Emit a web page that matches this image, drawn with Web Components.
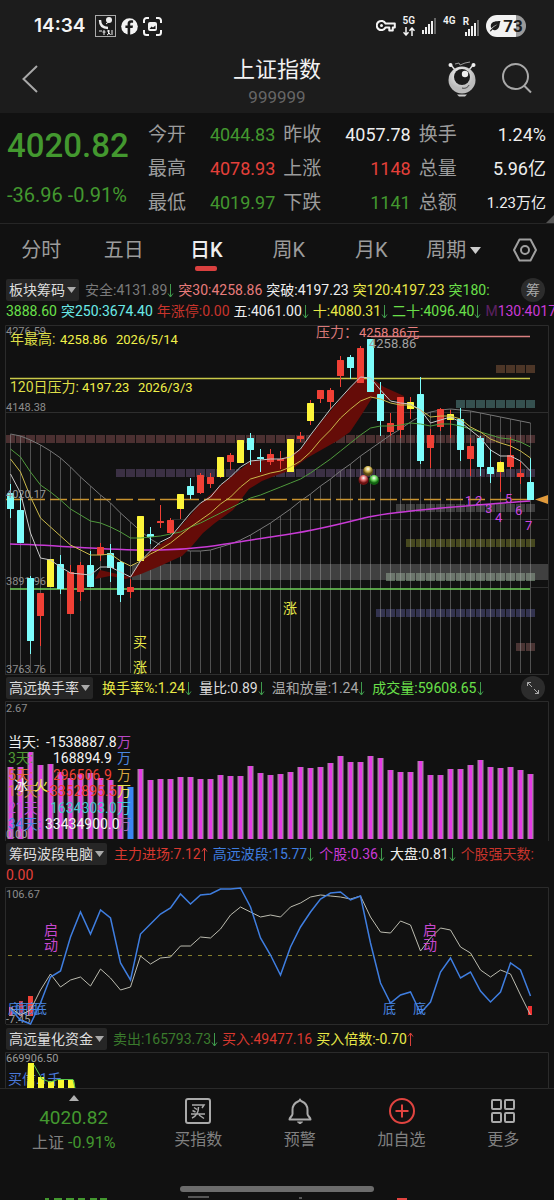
<!DOCTYPE html>
<html lang="zh-CN">
<head>
<meta charset="utf-8">
<meta name="viewport" content="width=device-width, initial-scale=1">
<title>上证指数 999999</title>
<style>
  html { background: #111; }
  body { margin: 0; background: #111; color: #ddd; font: 14px/20px Roboto, "Noto Sans CJK SC", sans-serif; overflow-x: hidden; }
</style>
</head>
<body>
<stock-page></stock-page>

<script>
const BASE = `<style>
  *, *::before, *::after { box-sizing: border-box; }
  :host { display: block; }
  button, select, a { font: inherit; color: inherit; background: none; border: 0; padding: 0; margin: 0; text-decoration: none; }
  svg { display: block; flex: none; }
</style>`;

function component(name, markup) {
  customElements.define(name, class extends HTMLElement {
    constructor() {
      super();
      const html = typeof markup === 'function' ? markup(this) : markup;
      const template = document.createElement('template');
      template.innerHTML = BASE + html;
      this.attachShadow({ mode: 'open' }).append(template.content.cloneNode(true));
    }
  });
}

/* ---------- status bar ---------- */
const signalBars = `<svg width="14" height="16" viewBox="0 0 14 16" fill="#eee"><rect y="12" width="2" height="4"/><rect x="3" y="9" width="2" height="7"/><rect x="6" y="6" width="2" height="10"/><rect x="9" y="3" width="2" height="13"/><rect x="12" y="0" width="2" height="16" fill="#666"/></svg>`;

component('status-bar', `
<style>
  :host { display: flex; align-items: center; justify-content: space-between; padding: 14px 28px 14px 34px; color: #f4f4f4; }
  .side { display: flex; align-items: center; height: 24px; }
  time { font: 600 19px/24px Inter, sans-serif; margin-right: 4px; }
  .left { gap: 5px; }
  .right { gap: 7px; }
  .net { display: grid; justify-items: center; font: 600 10px/11px Roboto, sans-serif; height: 22px; }
  .roam { display: flex; align-items: flex-end; }
  .roam b { font: 600 10px/11px Roboto, sans-serif; align-self: flex-start; margin-right: -4px; }
  .roam svg { margin-top: 4px; }
  .battery { display: flex; align-items: center; justify-content: center; gap: 2px; width: 40px; height: 22px; border-radius: 11px; background: linear-gradient(90deg, #f2f2f2 74%, #9a9a9a 74%); color: #1c1c1c; font: 700 17px/22px Roboto, sans-serif; }
</style>
<div class="side left">
  <time>14:34</time>
  <svg width="21" height="22" viewBox="0 0 21 22" fill="none" stroke="#eee"><rect x=".5" y=".5" width="20" height="21" stroke="#aaa"/><path d="M5 5c0 5 3 8 8 8" stroke-width="2.4"/><circle cx="14" cy="5" r="3" fill="#eee" stroke="none"/><path d="M11 9l5-4M4 16h3m2-1v5m-1.500-3h3M12 16h3m-1.500-1v4l-1.500 1m1.500-3l2 3M17 15v5" stroke-width="1"/></svg>
  <svg width="17" height="17" viewBox="0 0 17 17"><circle cx="8.500" cy="8.500" r="8.300" fill="#f4f4f4"/><path d="M9.200 17v-7h2.400l.4-2.600H9.200V6.200c0-.9.400-1.400 1.500-1.400h1.400V2.500c-3.600-.8-5.500.5-5.500 3.300v1.600H4.400V10h2.200v7z" fill="#1c1c1c"/></svg>
  <svg width="19" height="19" viewBox="0 0 19 19" fill="none" stroke="#f4f4f4" stroke-width="2"><path d="M1 6V3.500A2.500 2.500 0 0 1 3.500 1H6M13 1h2.500A2.500 2.500 0 0 1 18 3.500V6M18 13v2.500a2.500 2.500 0 0 1-2.500 2.500H13M6 18H3.500A2.500 2.500 0 0 1 1 15.500V13"/><rect x="5" y="5" width="9" height="9" rx="2" fill="#f4f4f4" stroke="none"/><path d="M6.500 12l2-2.500 1.500 1 2.500-2v3.500z" fill="#1c1c1c" stroke="none"/></svg>
</div>
<div class="side right">
  <svg width="20" height="14" viewBox="0 0 20 14" fill="none" stroke="#f4f4f4" stroke-width="2"><path d="M9.500 4.500h9.300v4h-2v3h-3.500v-3H9.500A4.600 4.600 0 1 1 9.500 4.500z" stroke-linejoin="round"/><circle cx="5.500" cy="6.500" r="1.500" fill="#f4f4f4" stroke="none"/></svg>
  <div class="net"><span>5G</span><svg width="12" height="9" viewBox="0 0 12 9" fill="none" stroke="#f4f4f4" stroke-width="1.500"><path d="M3 0v8M.5 5.300L3 8l2.500-2.700M9 9V1M6.500 3.700L9 1l2.500 2.700"/></svg></div>
  ${signalBars}
  <div class="net"><span>4G</span></div>
  <div class="roam"><b>R</b>${signalBars}</div>
  <div class="battery"><svg width="12" height="12" viewBox="0 0 12 12"><path d="M11.500 1C7 1 3 1.500 2 4.500c-.6 1.800 0 3 .5 3.800C4 6.500 6 5 8.500 4.500 5.500 6 3 8 .8 11l1 .6 1.700-2C6 11 9 9.800 10 7c.7-2 .5-4 1.500-6z" fill="#1c1c1c"/></svg><span>73</span></div>
</div>`);

/* ---------- title bar ---------- */
component('title-bar', `
<style>
  :host { display: grid; grid-template-columns: 1fr auto 1fr; align-items: center; height: 61px; padding: 0 22px 2px; }
  h1 { margin: 0; font: 400 22px/30px Roboto, "Noto Sans CJK SC", sans-serif; color: #f2f2f2; }
  .name { text-align: center; }
  p { margin: 0; font-size: 17px; line-height: 24px; color: #666; }
  button { padding-bottom: 6px; justify-self: start; }
  .tools { display: flex; justify-content: flex-end; align-items: center; gap: 26px; }
</style>
<button aria-label="返回"><svg width="16" height="28" viewBox="0 0 16 28" fill="none" stroke="#a8a8a8" stroke-width="2"><path d="M15 1L1.500 14 15 27"/></svg></button>
<div class="name"><h1>上证指数</h1><p>999999</p></div>
<div class="tools">
  <button aria-label="助手"><svg width="28" height="36" viewBox="0 0 28 36">
    <defs><radialGradient id="eye" cx=".45" cy=".3"><stop offset="0" stop-color="#fff"/><stop offset="1" stop-color="#bbb"/></radialGradient></defs>
    <path d="M3 4l4 5M25 4l-4 5" stroke="#ddd" stroke-width="1.500"/><path d="M7 3l4-1 1 2 5-2 5-1" stroke="#999" fill="none"/>
    <circle cx="2.500" cy="4" r="2" fill="#eee"/><circle cx="25.500" cy="4" r="2" fill="#eee"/>
    <circle cx="14" cy="19" r="13.500" fill="url(#eye)"/><circle cx="14" cy="16" r="8" fill="#1c1c1c"/><circle cx="17" cy="13" r="3.200" fill="#eee"/>
    <path d="M14 27c3 1 6-.5 7-3" stroke="#444" fill="none"/><path d="M9 33.500h10l-2 2h-6z" fill="#ccc"/></svg></button>
  <button aria-label="搜索"><svg width="30" height="31" viewBox="0 0 30 31" fill="none" stroke="#a8a8a8" stroke-width="2"><circle cx="13.500" cy="13.500" r="12.500"/><path d="M22 22.500l7 7"/></svg></button>
</div>`);

/* ---------- quote panel ---------- */
component('quote-stat', `
<style>
  :host { display: flex; align-items: center; justify-content: space-between; height: 34px; white-space: nowrap; }
  .label { font-size: 19px; color: #9c9c9c; }
  .value { font-size: 18px; color: #eee; }
  :host([tone=up]) .value { color: #e5403a; }
  :host([tone=down]) .value { color: #43982f; }
  :host([small]) .value { font-size: 15px; }
</style>
<span class="label"><slot name="label"></slot></span><span class="value"><slot></slot></span>`);

const stat = (label, value, tone = '', extra = '') => `<quote-stat tone="${tone}" ${extra}><span slot="label">${label}</span>${value}</quote-stat>`;

component('quote-panel', `
<style>
  :host { display: flex; gap: 8px; padding: 5px 8px 3px 7px; border-bottom: 1px solid #262626; position: relative; }
  .last { width: 133px; flex: none; color: #43982f; }
  .price { font-size: 33px; line-height: 56px; font-weight: 500; }
  .change { font-size: 20px; line-height: 42px; white-space: nowrap; }
  .stats { flex: 1; display: grid; grid-template-columns: repeat(3, 1fr); column-gap: 8px; }
  .corner { position: absolute; right: 0; bottom: 0; }
</style>
<div class="last"><div class="price">4020.82</div><div class="change">-36.96 -0.91%</div></div>
<div class="stats">
  ${stat('今开', '4044.83', 'down')}${stat('昨收', '4057.78')}${stat('换手', '1.24%')}
  ${stat('最高', '4078.93', 'up')}${stat('上涨', '1148', 'up')}${stat('总量', '5.96亿')}
  ${stat('最低', '4019.97', 'down')}${stat('下跌', '1141', 'down')}${stat('总额', '1.23万亿', '', 'small')}
</div>
<svg class="corner" width="8" height="8"><path d="M8 0v8H0z" fill="#555"/></svg>`);

/* ---------- period tabs ---------- */
component('period-tabs', `
<style>
  :host { display: grid; grid-template-columns: repeat(6, 7fr) 5fr; height: 52px; color: #9c9c9c; font-size: 20px; }
  button { display: flex; align-items: center; justify-content: center; gap: 4px; position: relative; white-space: nowrap; }
  button[aria-selected=true] { color: #eee; font-weight: 500; }
  button[aria-selected=true]::after { content: ""; position: absolute; bottom: 5px; width: 22px; height: 5px; border-radius: 2px; background: #d9403f; }
</style>
<button>分时</button><button>五日</button><button aria-selected="true">日K</button><button>周K</button><button>月K</button>
<button>周期<svg width="11" height="7"><path d="M0 0h11L5.500 7z" fill="#ccc"/></svg></button>
<button aria-label="设置"><svg width="24" height="24" viewBox="0 0 24 24" fill="none" stroke="#a0a0a0" stroke-width="2"><path d="M6.500 1.500h11L23 12l-5.500 10.500h-11L1 12z" stroke-linejoin="round"/><circle cx="12" cy="12" r="4"/></svg></button>`);

/* ---------- indicator rows ---------- */
component('indicator-select', (el) => `
<style>
  :host { display: inline-flex; flex: none; margin-right: 2px; }
  label { display: flex; align-items: center; gap: 2px; height: 22px; padding: 0 3px; background: #262626; border-radius: 2px; color: #ddd; }
  select { appearance: none; line-height: 20px; outline: 0; }
</style>
<label><select aria-label="指标"><option>${el.getAttribute('name')}</option></select><svg width="9" height="6"><path d="M0 0h9L4.500 6z" fill="#aaa"/></svg></label>`);

component('indicator-value', (el) => {
  const dir = el.getAttribute('dir-to');
  const arrow = dir === 'down'
    ? '<svg width="7" height="15" viewBox="0 0 7 15" fill="none" stroke="#3f9a4c"><path d="M3.500 1v13M1 10.500L3.500 14 6 10.500"/></svg>'
    : dir === 'up' ? '<svg width="7" height="15" viewBox="0 0 7 15" fill="none" stroke="#d8403a"><path d="M3.500 14V1M1 4.500L3.500 1 6 4.500"/></svg>' : '';
  return `<style>:host { display: inline-flex; align-items: center; flex: none; white-space: nowrap; color: ${el.getAttribute('color')}; }</style><span><slot></slot></span>${arrow}`;
});

component('indicator-bar', `
<style>
  :host { padding: 2px 0 2px 6px; overflow: hidden; }
  .row { display: flex; align-items: center; gap: var(--gap, 5px); height: 22px; }
  .end { margin-left: auto; padding-right: 9px; }
</style>
<div class="row"><slot></slot><div class="end"><slot name="end"></slot></div></div>
<slot name="more"></slot>`);

const value = (text, color, dir = '') => `<indicator-value color="${color}" dir-to="${dir}">${text}</indicator-value>`;

/* ---------- chart helpers ---------- */
const X = (i) => 10.5 + i * 10;
const line = (ys, color, width = 1) => `<polyline points="${ys.map((y, i) => X(i) + ',' + y).join(' ')}" fill="none" stroke="${color}" stroke-width="${width}"/>`;
const text = (x, cy, str, color, size = 14, extra = '') => `<text x="${x}" y="${cy + Math.round(size * 0.36)}" fill="${color}" font-size="${size}" xml:space="preserve" ${extra}>${str}</text>`;
const frame = (top, bottom) => `<path d="M5.500 ${bottom}V${top}.5H548.500V${bottom}" fill="none" stroke="#2b2b2b"/>`;
const chart = (top, height, body) => `<style>svg { width: 100%; height: auto; }</style><svg viewBox="0 ${top} 554 ${height}" role="img">${body}</svg>`;

const RED = '#f04035', CYAN = '#7dfdfb', YELLOW = '#fdf53a';

/* colour, body top, body bottom, wick top, wick bottom */
const candles = [
  ['c',493,509,484,518],['c',510,543,493,543],['c',578,641,576,654],['r',593,616,593,646],['y',559,587,559,587],
  ['c',564,589,555,594],['r',572,614,565,614],['r',565,592,562,601],['c',565,587,551,587],['r',547,555,543,561],
  ['c',553,568,544,582],['c',562,595,561,602],['r',587,592,579,598],['y',516,561,516,561],['c',534,537,527,544],
  ['r',521,523,505,528],['r',520,533,518,534],['y',494,509,494,519],['c',486,495,478,499],['r',475,493,473,494],
  ['r',477,484,473,488],['y',457,477,457,478],['r',455,462,453,470],['y',440,463,440,463],['c',438,450,433,465],
  ['c',457,459,449,472],['r',454,462,449,465],['r',459,461,451,469],['y',439,472,439,472],['r',436,439,432,442],
  ['y',403,421,400,425],['r',390,399,390,403],['r',390,402,388,409],['r',360,376,356,387],['c',357,368,355,379],
  ['r',348,383,346,383],['c',339,392,339,392],['c',394,421,382,436],['r',423,432,413,436],['r',397,430,397,438],
  ['y',402,409,397,419],['c',394,461,377,464],['r',435,448,429,468],['r',409,427,408,431],['y',414,420,410,438],
  ['c',419,450,408,461],['r',446,459,438,476],['c',438,467,436,476],['c',467,474,449,483],['y',462,472,461,492],
  ['r',455,467,437,469],['r',473,477,462,484],['c',482,500,458,500],
];
const ma5 = [474,493,533,558,560,567,573,574,575,567,567,572,577,561,551,542,537,525,513,503,497,485,477,467,461,460,459,459,457,449,435,422,409,398,387,377,378,390,401,403,404,410,423,420,417,422,430,438,450,456,456,461,471];
const ma10 = [459,472,497,518,527,536,545,550,555,555,554,561,566,561,554,549,543,535,527,520,513,504,497,487,479,476,473,471,467,461,452,440,430,418,409,401,397,399,403,405,405,410,417,416,416,419,427,432,439,443,446,451,458];
const ma20 = [449,457,472,485,492,500,509,515,521,523,527,532,538,538,537,536,534,532,527,523,518,513,508,503,498,495,491,487,483,479,473,466,459,451,443,435,428,426,426,425,423,424,426,424,424,426,429,432,435,438,439,442,447];
const longCurve = [434,436,440,445,451,458,467,477,486,495,503,513,522,531,539,545,548,550,551,551,550,547,544,540,535,529,523,516,509,501,494,486,479,471,464,456,449,442,435,429,422,416,412,410,409,410,411,413,415,417,419,421,423];
const chipRows = [[496,365,4,'#4d3627'],[456,400,8,'#35504f'],[6,435,53,'#4b3031'],[116,469,42,'#3b3044'],[396,504,14,'#3c3c3c'],[406,539,13,'#46481f'],[386,573,15,'#5a6b5a'],[376,609,16,'#33334f'],[516,643,2,'#4a3534']];

component('kline-chart', () => chart(325, 350, `
  ${frame(325, 675)}
  <path d="M6 412.500H548M172 519.500H548M531 587.500H548M6 674.500H548" stroke="#2e2e2e"/>
  ${chipRows.map(([x, y, n, c]) => Array.from({ length: n }, (_, k) => `<rect x="${x + k * 10}" y="${y}" width="9" height="8" fill="${c}"/>`).join('')).join('')}
  <rect x="132" y="564" width="416" height="16" fill="#888" opacity=".4"/>
  ${longCurve.map((y, i) => `<path d="M${X(i)} ${y}V673" stroke="#aaa" stroke-opacity=".42"/>`).join('')}
  ${line(longCurve, '#777')}
  <path d="M95 579L100 570 130 577 141 561 152 550 171 537 201 503 221 485 251 461 281 459 301 449 321 422 350 388 360 377 371 378 384 387 404 396 404 400 390 400 372 398 362 414 350 432 337 441 307 458 291 470 277 475 262 481 249 489 233 510 215 523 203 533 192 546 182 556 160 566 141 574 126 579 110 576z" fill="#650c08"/>
  <path d="M371 336.500H530" stroke="#d98080" stroke-width="1.500"/>
  <path d="M10 378.500H530" stroke="#c9c94a" stroke-width="1.500"/>
  <path d="M10 589H530" stroke="#6fd058" stroke-width="1.500"/>
  <path d="M6 499.500H534" stroke="#c9932f" stroke-width="1.500" stroke-dasharray="17 5"/>
  ${text(6, 331, '4276.59', '#8c8c8c', 11)}${text(6, 407, '4148.38', '#8c8c8c', 11)}${text(6, 581, '3891.96', '#8c8c8c', 11)}${text(6, 669, '3763.76', '#8c8c8c', 11)}
  <path d="M10 544C60 545 110 551 160 550S240 541 277 536 340 524 364 518 450 507 530 501" fill="none" stroke="#c93ad6" stroke-width="1.500"/>
  ${candles.map(([c, t, b, h, l], i) => {
    const col = c === 'r' ? RED : c === 'c' ? CYAN : YELLOW;
    const wick = c === 'c' ? CYAN : RED;
    return (h < t || l > b ? `<path d="M${X(i)} ${h}V${l}" stroke="${wick}"/>` : '') + `<rect x="${X(i) - 3.5}" y="${t}" width="7" height="${b - t}" rx=".5" fill="${col}"/>`;
  }).join('')}
  ${line(ma20, '#4f9a3c')}${line(ma10, '#c9b84a')}${line(ma5, '#c8c8c8')}
  ${text(6, 494, '4020.17', '#9a9a9a', 11)}
  ${text(10, 339, '年最高:', '#dede48')}${text(60, 339, '4258.86', '#f0f04a', 13)}${text(116, 339, '2026/5/14', '#f0f04a', 13)}
  ${text(10, 387, '120日压力:', '#dede48')}${text(82, 387, '4197.23', '#f0f04a', 13)}${text(138, 387, '2026/3/3', '#f0f04a', 13)}
  ${text(316, 332, '压力：', '#d87878')}${text(359, 332, '4258.86元', '#e88080', 13)}
  ${text(369, 343, '4258.86', '#a0a0a0', 13)}
  ${text(133, 642, '买', '#e8e848')}${text(133, 667, '涨', '#e8e848')}${text(283, 608, '涨', '#e8e848')}
  ${[[465,500],[475,500],[485,508],[495,517],[505,498],[515,510],[525,525]].map(([x, y], i) => text(x, y, i + 1, '#d046e0', 13)).join('')}
  <path d="M535 499.500L548 495V504z" fill="#e09a3c"/>
  <defs>
    <radialGradient id="gold" cy=".3"><stop offset="0" stop-color="#fff"/><stop offset=".5" stop-color="#d8c060"/><stop offset="1" stop-color="#5c4a10"/></radialGradient>
    <radialGradient id="ruby" cy=".3"><stop offset="0" stop-color="#fff"/><stop offset=".5" stop-color="#e07070"/><stop offset="1" stop-color="#6c1010"/></radialGradient>
    <radialGradient id="jade" cy=".3"><stop offset="0" stop-color="#fff"/><stop offset=".5" stop-color="#70d860"/><stop offset="1" stop-color="#106010"/></radialGradient>
  </defs>
  <circle cx="368" cy="471" r="5" fill="url(#gold)"/><circle cx="363.500" cy="480" r="5" fill="url(#ruby)"/><circle cx="374" cy="480" r="5" fill="url(#jade)"/>
`));

const volumes = [767,767,752,765,764,772,778,774,773,778,780,785,787,769,780,779,779,777,777,779,779,775,776,776,766,773,775,774,772,767,768,767,763,756,762,762,756,758,770,772,772,761,775,775,769,769,765,760,767,768,767,770,774];
const flows = [
  ['当天:','#eee',46,'-1538887.8','#f4f4f4','#b848c4'],
  ['3天:','#4f9a34',53,'168894.9','#f4f4f4','#4a86e0'],
  ['5天:','#e0683a',53,'296506.9','#f04035','#d8a840'],
  ['13天:','#d08a50',46,'-3352895.5','#f04035','#e8e048'],
  ['21天:','#c050e0',50,'1634303.0','#48c8d0','#48c8d8'],
  ['34天:','#4a86e0',45,'33434900.0','#f4f4f4','#9a6aa8'],
];
component('volume-chart', () => chart(701, 140, `
  ${frame(701, 841)}
  ${text(6, 708, '2.67', '#8c8c8c', 11)}
  ${volumes.map((y, i) => i === 12
    ? `<rect x="${X(i) - 3}" y="${y}" width="6" height="${839 - y}" fill="#3a86f0"/>`
    : `<rect x="${X(i) - 3}" y="${y}" width="6" height="${839 - y}" fill="#b07aac"/><rect x="${X(i) - 1.5}" y="${y}" width="3" height="${839 - y}" fill="#e63ae6"/>`).join('')}
  ${text(6, 834, '0.00', '#a8a0a8', 11)}
  ${flows.map(([l, lc, x, n, nc, uc], i) => text(8, 742 + Math.round(i * 16.4), l, lc) + text(x, 742 + Math.round(i * 16.4), n, nc) + text(117, 742 + Math.round(i * 16.4), '万', uc)).join('')}
  ${text(14, 785, '冰', '#f4f4f4')}${text(34, 785, '火', '#f0f04a')}
`));

const waveBlue = [1009,1020,1024,1003,977,971,937,912,934,910,918,963,980,934,924,914,908,894,904,895,894,889,889,888,907,938,955,975,947,927,912,899,893,892,900,896,943,983,1003,995,992,1013,1002,972,958,978,972,991,1002,992,963,970,996];
const waveWhite = [1008,1015,1010,990,974,987,980,977,986,969,978,990,987,956,964,958,957,946,946,937,938,929,915,907,912,917,915,917,907,903,897,895,896,897,899,896,917,932,933,921,925,951,938,928,930,947,953,970,977,970,974,995,1015];
component('wave-chart', () => chart(887, 138, `
  ${frame(887, 1024)}<path d="M6 1024.500H548" stroke="#2b2b2b"/>
  ${text(6, 894, '106.67', '#8c8c8c', 11)}
  <path d="M8 955.500H534" stroke="#86802c" stroke-dasharray="4 6"/>
  <rect x="9" y="1007" width="4" height="9" fill="#d84858"/><rect x="19" y="1001" width="4" height="15" fill="#c04050"/><rect x="28" y="996" width="5" height="20" fill="#f04035"/><rect x="528" y="1006" width="4" height="9" fill="#f03030"/>
  ${[8, 15, 25, 34, 383, 413].map((x) => text(x, 1008, '底', '#4a86e0', 13)).join('')}
  ${text(6, 1019, '-7.45', '#a0a0a0', 11)}
  ${line(waveWhite, '#bcbcb0')}${line(waveBlue, '#3f7ee0', 1.5)}
  ${[44, 423].map((x) => text(x, 930, '启', '#c848d0') + text(x, 945, '动', '#c848d0')).join('')}
`));

component('fund-chart', () => chart(1052, 36, `
  ${frame(1052, 1088)}
  ${text(6, 1058, '669906.50', '#9a9a9a', 11)}
  ${text(8, 1079, '买信.1千', '#4a78d8')}
  <path d="M28 1063h6v25h-7zM38 1077h6v11h-6zM48 1081h6v7h-6zM58 1080h6v8h-6zM68 1080h6l1 8h-7z" fill="#f8f830"/>
  <path d="M34 1065L42 1079 50 1082 58 1079.500H73L75 1088" fill="none" stroke="#58c848"/>
`));

/* ---------- bottom navigation ---------- */
component('nav-item', `
<style>
  a { display: grid; justify-items: center; align-content: start; gap: 4px; padding-top: 9px; color: #808080; font-size: 16px; line-height: 24px; }
  ::slotted(svg) { display: block; }
</style>
<a href="#"><slot name="icon"></slot><span><slot></slot></span></a>`);

component('bottom-nav', `
<style>
  :host { display: grid; grid-template-columns: 29fr repeat(4, 20fr); height: 96px; border-top: 1px solid #2a2a2a; }
  .index { display: grid; justify-items: center; align-content: start; padding-top: 6px; color: #43982f; }
  .index b { font-weight: 400; font-size: 19px; line-height: 26px; margin-top: 4px; }
  .index span { font-size: 16px; line-height: 24px; }
  i { font-style: normal; color: #808080; }
</style>
<a class="index" href="#"><svg width="10" height="6"><path d="M5 0l5 6H0z" fill="#b0b0b0"/></svg><b>4020.82</b><span><i>上证</i> -0.91%</span></a>
<nav-item><svg slot="icon" width="26" height="26" viewBox="0 0 26 26" fill="none" stroke="#aaa" stroke-width="2"><rect x="1" y="1" width="24" height="24" rx="2"/><path d="M7 7h12l-2 3M9 9.500l3 2M7.500 12.500l3 1.500M6 16h14M13.500 9c0 6-2 9-6.500 11M14 17l5 3.500" stroke-width="1.500"/></svg>买指数</nav-item>
<nav-item><svg slot="icon" width="26" height="26" viewBox="0 0 26 26" fill="none" stroke="#aaa" stroke-width="2"><path d="M13 1.500c0 1-.3 1.300-2 2C7.500 5 5.500 8 5.500 12v4c0 2-3 3.500-3 5.500h21c0-2-3-3.500-3-5.500v-4c0-4-2-7-5.500-8.500-1.700-.7-2-1-2-2z" stroke-linejoin="round"/><path d="M10.500 24h5L13 26z" fill="#aaa" stroke-width="1"/></svg>预警</nav-item>
<nav-item><svg slot="icon" width="26" height="26" viewBox="0 0 26 26" fill="none" stroke="#e04440" stroke-width="2"><circle cx="13" cy="13" r="12"/><path d="M13 6.500v13M6.500 13h13"/></svg>加自选</nav-item>
<nav-item><svg slot="icon" width="26" height="26" viewBox="0 0 26 26" fill="none" stroke="#aaa" stroke-width="2"><rect x="2" y="2" width="9" height="9" rx="1"/><rect x="15" y="2" width="9" height="9" rx="1"/><rect x="2" y="15" width="9" height="9" rx="1"/><rect x="15" y="15" width="9" height="9" rx="1"/></svg>更多</nav-item>`);

component('home-indicator', `
<style>
  :host { display: grid; justify-items: center; padding: 2px 0 4px; }
  div { width: 35%; height: 6px; border-radius: 3px; background: #6c6c6c; }
</style><div></div>`);

/* top edge of the next sheet, peeking above the screen's end */
component('sheet-peek', `
<style>
  :host { height: 4px; overflow: hidden; }
  svg { width: 100%; height: 4px; }
</style>
<svg viewBox="0 0 554 4" preserveAspectRatio="none"><path d="M45 3h4M54 3h8M66 3h8M78 3h7M90 3h7M100 3h7" stroke="#43982f" stroke-width="2"/><path d="M188 1h21M299 2h3" stroke="#555" stroke-width="2"/><path d="M397 3h10" stroke="#e04440" stroke-width="2"/></svg>`);

/* ---------- page ---------- */
component('stock-page', `
<style>
  header { background: #1c1c1c; }
  .line { display: flex; align-items: center; gap: 4px; height: 20px; }
  .first { --gap: 4px; padding: 3px 0 4px 6px; }
  .turnover { --gap: 7px; }
  .funds { --gap: 4px; padding: 3px 0 2px 6px; }
  .round { display: grid; place-items: center; width: 24px; height: 24px; border-radius: 50%; background: #2c2c2c; color: #aaa; }
</style>
<header><status-bar></status-bar><title-bar></title-bar></header>
<main>
  <quote-panel></quote-panel>
  <period-tabs></period-tabs>
  <indicator-bar class="first">
    <indicator-select name="板块筹码"></indicator-select>
    ${value('安全:4131.89', '#7a7a7a', 'down')}${value('突30:4258.86', '#e87c7c')}${value('突破:4197.23', '#eee')}${value('突120:4197.23', '#e8e848')}${value('突180:', '#6ae04a')}
    <button class="round" slot="end">筹</button>
    <div class="line" slot="more">${value('3888.60', '#6ae04a')}${value('突250:3674.40', '#6aeae8')}${value('年涨停:0.00', '#c8342c')}${value('五:4061.00', '#eee', 'down')}${value('十:4080.31', '#e8e848', 'down')}${value('二十:4096.40', '#6ae04a', 'down')}${value('<span style="opacity:.4">M</span>130:4017', '#c93ad6')}</div>
  </indicator-bar>
  <kline-chart></kline-chart>
  <indicator-bar class="turnover">
    <indicator-select name="高远换手率"></indicator-select>
    ${value('换手率%:1.24', '#e8e848', 'down')}${value('量比:0.89', '#ddd', 'down')}${value('温和放量:1.24', '#a8a8a8', 'down')}${value('成交量:59608.65', '#6ae04a', 'down')}
    <button class="round" slot="end" aria-label="全屏"><svg width="12" height="12" viewBox="0 0 12 12" fill="none" stroke="#aaa"><path d="M.5 4V.5H4M.5.500L5 5M11.500 8v3.500H8M11.500 11.500L7 7"/></svg></button>
  </indicator-bar>
  <volume-chart></volume-chart>
  <indicator-bar>
    <indicator-select name="筹码波段电脑"></indicator-select>
    ${value('主力进场:7.12', '#d8382f', 'up')}${value('高远波段:15.77', '#3f7ee0', 'down')}${value('个股:0.36', '#c93ad6', 'down')}${value('大盘:0.81', '#eee', 'down')}${value('个股强天数:', '#c8342c')}
    <div class="line" slot="more">${value('0.00', '#e5403a')}</div>
  </indicator-bar>
  <wave-chart></wave-chart>
  <indicator-bar class="funds">
    <indicator-select name="高远量化资金"></indicator-select>
    ${value('卖出:165793.73', '#3a7a2c', 'down')}${value('买入:49477.16', '#d8382f')}${value('买入倍数:-0.70', '#e8e848', 'up')}
  </indicator-bar>
  <fund-chart></fund-chart>
</main>
<bottom-nav></bottom-nav>
<home-indicator></home-indicator>
<sheet-peek></sheet-peek>`);
</script>
</body>
</html>
